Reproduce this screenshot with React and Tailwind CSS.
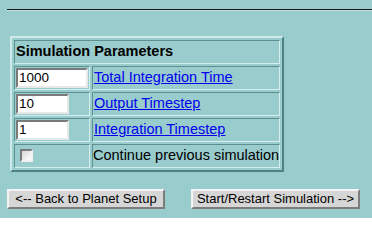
import React from 'react';

const FONT = { fontFamily: '"Liberation Sans", Arial, sans-serif' };

const ROWS = [
  { value: '1000', label: 'Total Integration Time', wide: true },
  { value: '10', label: 'Output Timestep' },
  { value: '1', label: 'Integration Timestep' },
];

// Old-school form page: inset cells inside an outset table.
const cell = 'border border-t-[#5f8f8f] border-l-[#5f8f8f] border-b-[#d6eeee] border-r-[#d6eeee] p-0 whitespace-nowrap';

function TextBox({ value, wide }) {
  return (
    <div
      className={`flex h-[20px] items-center border-2 border-t-[#7a7a7a] border-l-[#7a7a7a] border-b-[#e8e8e8] border-r-[#e8e8e8] bg-white pl-[1px] text-[13.5px] text-black ${
        wide ? 'w-[72px]' : 'w-[53px]'
      }`}
    >
      {value}
    </div>
  );
}

function Button({ children, className }) {
  return (
    <div
      className={`flex h-[20px] shrink-0 items-center justify-center whitespace-nowrap border-2 border-t-[#f4f4f4] border-l-[#f4f4f4] border-b-[#7c7c7c] border-r-[#7c7c7c] bg-[#d6d6d6] text-[13px] text-black ${className}`}
    >
      {children}
    </div>
  );
}

export default function App() {
  return (
    <div className="h-[218px] w-[372px] overflow-hidden bg-[#99cccc]" style={FONT}>
      <div className="ml-[7px] pt-[9px]">
        <div className="h-[2px] border-t border-t-[#1a1a1a] border-b border-b-[#bfe0e0]" />
      </div>

      <table className="ml-[10px] mt-[25px] w-[274px] table-fixed border-separate border-spacing-[2px] border-2 border-t-[#cfe8e8] border-l-[#cfe8e8] border-b-[#4f8383] border-r-[#4f8383]">
        <colgroup>
          <col className="w-[76px]" />
          <col />
        </colgroup>
        <tbody>
          <tr>
            <td colSpan={2} className={`${cell} h-[21px] pl-[1px] text-[14.5px] font-bold text-black`}>
              Simulation Parameters
            </td>
          </tr>
          {ROWS.map((r) => (
            <tr key={r.label}>
              <td className={`${cell} h-[24px] pl-[1px]`}>
                <TextBox value={r.value} wide={r.wide} />
              </td>
              <td className={`${cell} pl-[1px] text-[14.5px]`}>
                <a href="#" className="text-[#0000ee] underline">
                  {r.label}
                </a>
              </td>
            </tr>
          ))}
          <tr>
            <td className={`${cell} h-[24px] pl-[5px]`}>
              <div className="h-[13px] w-[13px] border-2 border-t-[#7a7a7a] border-l-[#7a7a7a] border-b-[#f0f0f0] border-r-[#f0f0f0] bg-gradient-to-br from-[#d8d8d8] to-white" />
            </td>
            <td className={`${cell} pl-0 text-[14.5px] text-black`}>Continue previous simulation</td>
          </tr>
        </tbody>
      </table>

      <div className="mt-[17px] flex pl-[7px]">
        <Button className="w-[158px]">&lt;-- Back to Planet Setup</Button>
        <Button className="ml-[26px] w-[169px]">Start/Restart Simulation --&gt;</Button>
      </div>
    </div>
  );
}
